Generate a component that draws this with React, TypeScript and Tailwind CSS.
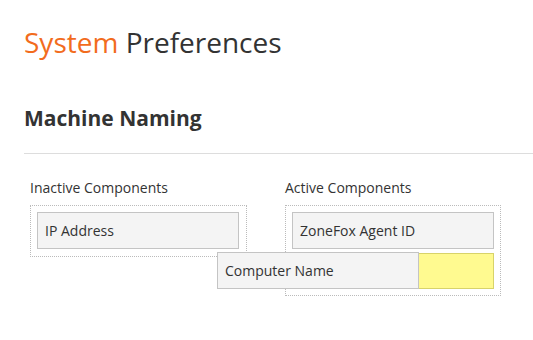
import React from "react";

const font = { fontFamily: '"Open Sans", "Noto Sans", sans-serif' };

function Item({ label, className = "" }: { label: string; className?: string }) {
  return (
    <div
      className={
        "h-[37px] border border-[#c4c4c4] bg-[#f4f4f4] pl-[7px] flex items-center text-[14px] text-[#333] " +
        className
      }
    >
      {label}
    </div>
  );
}

export default function App() {
  return (
    <div className="relative w-[533px] h-[340px] bg-white overflow-hidden" style={font}>
      <div className="pl-[24px] pt-[22px]">
        <h1 className="text-[28px] leading-[40px] text-[#333]">
          <span className="text-[#f26c1d]">System</span> Preferences
        </h1>
        <h2 className="mt-[41px] text-[21px] leading-[30px] font-bold text-[#333]">Machine Naming</h2>
        <div className="mt-[20px] h-px bg-[#dddddd]" />
        <div className="mt-[24px] pl-[6px] flex gap-[38px] items-start">
          <div className="w-[217px]">
            <div className="text-[14px] leading-[20px] text-[#333]">Inactive Components</div>
            <div className="mt-[7px] border border-dotted border-[#bbbbbb] p-[6px] pr-[7px] pb-[7px]">
              <Item label="IP Address" />
            </div>
          </div>
          <div className="w-[216px]">
            <div className="text-[14px] leading-[20px] text-[#333]">Active Components</div>
            <div className="mt-[7px] border border-dotted border-[#bbbbbb] p-[6px] flex flex-col gap-[4px]">
              <Item label="ZoneFox Agent ID" />
              <div className="h-[36px] border border-[#d8d36a] bg-[#fffa90]" />
            </div>
          </div>
        </div>
      </div>
      <div className="absolute left-[217px] top-[252px] w-[202px]">
        <Item label="Computer Name" className="h-[36px]" />
      </div>
    </div>
  );
}
